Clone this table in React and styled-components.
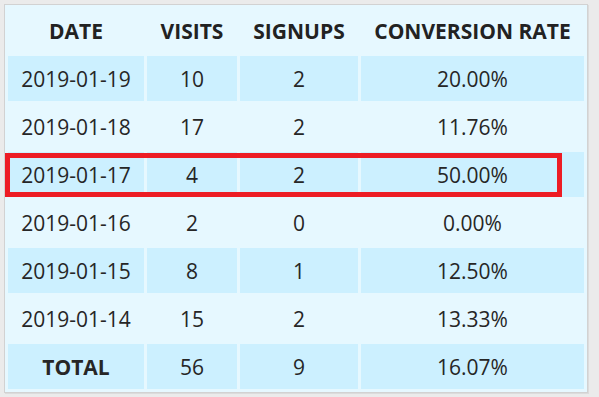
import React from 'react';
import styled, { createGlobalStyle } from 'styled-components';

const GlobalStyle = createGlobalStyle`
  html, body {
    margin: 0;
    padding: 0;
    background: #ebebeb;
  }
  body {
    font-family: 'Open Sans', 'Liberation Sans', sans-serif;
    color: #222;
  }
`;

const rows = [
  { date: '2019-01-19', visits: 10, signups: 2, rate: '20.00%' },
  { date: '2019-01-18', visits: 17, signups: 2, rate: '11.76%' },
  { date: '2019-01-17', visits: 4, signups: 2, rate: '50.00%' },
  { date: '2019-01-16', visits: 2, signups: 0, rate: '0.00%' },
  { date: '2019-01-15', visits: 8, signups: 1, rate: '12.50%' },
  { date: '2019-01-14', visits: 15, signups: 2, rate: '13.33%' },
];

const App = () => {
  return (
    <>
      <GlobalStyle />
      <Page>
        <Panel>
          <Table>
            <colgroup>
              <col style={{ width: 136 }} />
              <col style={{ width: 90 }} />
              <col style={{ width: 118 }} />
              <col />
            </colgroup>
            <thead>
              <tr>
                <Th>Date</Th>
                <Th>Visits</Th>
                <Th>Signups</Th>
                <Th>Conversion Rate</Th>
              </tr>
            </thead>
            <tbody>
              {rows.map((row, i) => (
                <Row key={row.date} $striped={i % 2 === 0}>
                  <Td>{row.date}</Td>
                  <Td>{row.visits}</Td>
                  <Td>{row.signups}</Td>
                  <Td>{row.rate}</Td>
                </Row>
              ))}
              <Row $striped>
                <Td $bold>TOTAL</Td>
                <Td>56</Td>
                <Td>9</Td>
                <Td>16.07%</Td>
              </Row>
            </tbody>
          </Table>
          <Highlight />
        </Panel>
      </Page>
    </>
  );
};

export default App;

const Page = styled.div`
  padding: 4px;
`;

const Panel = styled.div`
  position: relative;
  width: 582px;
  background: #e6f8ff;
  border: 1px solid #d2d2d2;
  box-shadow: 1px 1px 0 #dcdcdc;
`;

const Table = styled.table`
  width: 100%;
  border-collapse: separate;
  border-spacing: 3px;
  table-layout: fixed;
`;

const Th = styled.th`
  height: 45px;
  padding: 0;
  font-size: 21px;
  font-weight: 700;
  text-transform: uppercase;
  text-align: center;
  vertical-align: middle;
  color: #222;
`;

const Row = styled.tr`
  background: ${({ $striped }) => ($striped ? '#ccf0ff' : 'transparent')};
`;

const Td = styled.td`
  height: 45px;
  padding: 0;
  font-size: 21px;
  font-weight: ${({ $bold }) => ($bold ? 700 : 400)};
  text-align: center;
  vertical-align: middle;
  color: #262626;
`;

// red annotation box drawn over the third data row
const Highlight = styled.div`
  position: absolute;
  left: 0;
  top: 148px;
  width: 557px;
  height: 44px;
  box-sizing: border-box;
  border: 5px solid #ed1c24;
  pointer-events: none;
`;
